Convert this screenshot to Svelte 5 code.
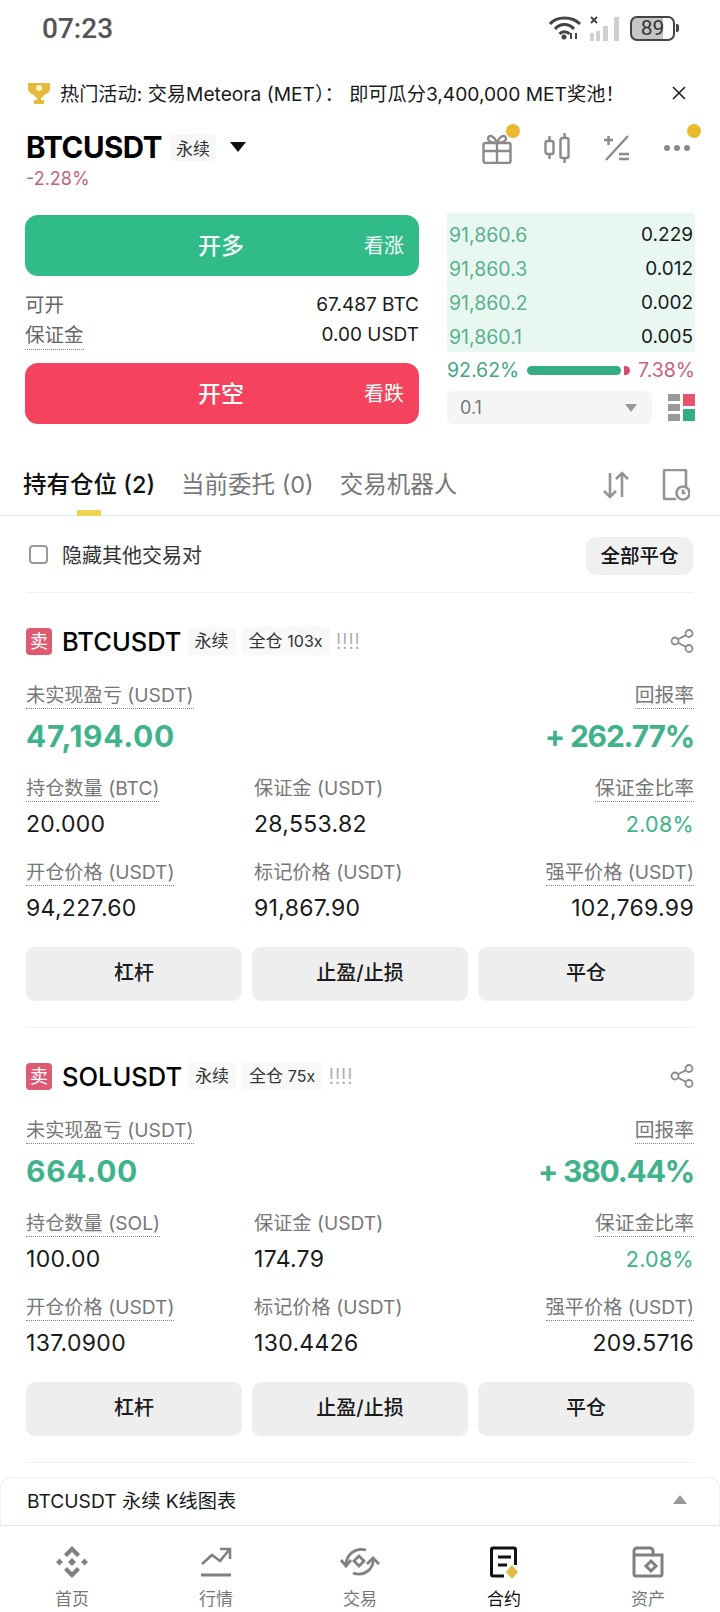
<script lang="ts">
  // Futures position screen
  const asks = [
    { price: "91,860.6", qty: "0.229" },
    { price: "91,860.3", qty: "0.012" },
    { price: "91,860.2", qty: "0.002" },
    { price: "91,860.1", qty: "0.005" },
  ];

  const positions = [
    {
      symbol: "BTCUSDT", leverage: "103x", pnl: "47,194.00", roe: "+ 262.77%",
      unit: "BTC", size: "20.000", margin: "28,553.82", ratio: "2.08%",
      entry: "94,227.60", mark: "91,867.90", liq: "102,769.99",
    },
    {
      symbol: "SOLUSDT", leverage: "75x", pnl: "664.00", roe: "+ 380.44%",
      unit: "SOL", size: "100.00", margin: "174.79", ratio: "2.08%",
      entry: "137.0900", mark: "130.4426", liq: "209.5716",
    },
  ];

  const nav = [
    { key: "home", label: "首页" },
    { key: "market", label: "行情" },
    { key: "trade", label: "交易" },
    { key: "futures", label: "合约" },
    { key: "assets", label: "资产" },
  ];
</script>

<div class="app">
  <div class="status">
    <span class="time">07:23</span>
    <div class="status-icons">
      <svg width="32" height="24" viewBox="0 0 32 24" fill="none" stroke="#444" stroke-width="3">
        <path d="M1 8C8 0 23 0 31 8" />
        <path d="M6 13C11 7 20 7 25 13" />
        <path d="M10.500 18C13 15 18 15 20.500 18" />
        <circle cx="15" cy="21" r="2.500" fill="#444" stroke="none" />
        <path d="M22 17v6M27 17v6" stroke-width="2" />
      </svg>
      <svg class="signal" width="29" height="25" viewBox="0 0 29 25">
        <path d="M1 1l6 6M7 1L1 7" stroke="#444" stroke-width="2" />
        <rect x="0" y="17" width="4" height="8" fill="#cfcfcf" />
        <rect x="6" y="15" width="4" height="10" fill="#cfcfcf" />
        <rect x="13" y="10" width="5" height="15" fill="#cfcfcf" />
        <rect x="24" y="1" width="5" height="24" fill="#cfcfcf" />
      </svg>
      <div class="battery"><span>89</span></div>
      <span class="battery-tip"></span>
    </div>
  </div>

  <div class="banner">
    <svg class="trophy" width="26" height="26" viewBox="0 0 26 26">
      <path d="M2 3h22v5c0 4-3 6-6 7-1 2-2 3-3 3v2h3v4H8v-4h3v-2c-1 0-2-1-3-3-3-1-6-3-6-7z" fill="#e6bb3c" />
      <circle cx="13" cy="8" r="3" fill="#fff3c8" />
    </svg>
    <span class="banner-text">热门活动: 交易Meteora (MET）： 即可瓜分3,400,000 MET奖池！</span>
    <svg class="close" width="16" height="16" viewBox="0 0 16 16" fill="none" stroke="#222" stroke-width="1.600">
      <path d="M2 2l12 12M14 2L2 14" />
    </svg>
  </div>

  <div class="ticker">
    <div class="ticker-left">
      <div class="ticker-name">
        <span class="ticker-symbol">BTCUSDT</span>
        <span class="chip">永续</span>
        <span class="caret"></span>
      </div>
      <div class="ticker-change">-2.28%</div>
    </div>
    <div class="ticker-icons">
      <span class="ticker-icon">
        <svg width="30" height="31" viewBox="0 0 30 31" fill="none" stroke="#8a8a8a" stroke-width="2.400">
          <rect x="1.500" y="10" width="27" height="20" rx="2" />
          <path d="M1.500 18h27M15 10v20" />
          <path d="M15 10c-3-8-9-9-9-4 0 2 4 4 9 4zM15 10c3-8 9-9 9-4 0 2-4 4-9 4z" />
        </svg>
        <i class="dot gift-dot"></i>
      </span>
      <span class="ticker-icon">
        <svg width="26" height="30" viewBox="0 0 26 30" fill="none" stroke="#8a8a8a" stroke-width="2.400">
          <rect x="1.500" y="8" width="8" height="13" rx="2" />
          <path d="M5.500 3v5M5.500 21v5" />
          <rect x="16.500" y="5" width="8" height="20" rx="2" />
          <path d="M20.500 0v5M20.500 25v5" />
        </svg>
      </span>
      <span class="ticker-icon">
        <svg width="26" height="26" viewBox="0 0 26 26" fill="none" stroke="#8a8a8a" stroke-width="2.400">
          <path d="M24 1L2 25M0 5h9M4.500 1v9M15 19h10M15 24h10" />
        </svg>
      </span>
      <span class="ticker-icon">
        <svg width="28" height="8" viewBox="0 0 28 8" fill="#8a8a8a">
          <circle cx="4" cy="4" r="3" />
          <circle cx="14" cy="4" r="3" />
          <circle cx="24" cy="4" r="3" />
        </svg>
        <i class="dot more-dot"></i>
      </span>
    </div>
  </div>

  <div class="order">
    <div class="order-left">
      <button class="trade buy">
        <span class="trade-title">开多</span>
        <span class="trade-hint">看涨</span>
      </button>
      <div class="info">
        <div class="info-row"><span class="info-key">可开</span><span>67.487 BTC</span></div>
        <div class="info-row"><span class="info-key dotted">保证金</span><span>0.00 USDT</span></div>
      </div>
      <button class="trade sell">
        <span class="trade-title">开空</span>
        <span class="trade-hint">看跌</span>
      </button>
    </div>

    <div class="order-right">
      <div class="book">
        {#each asks as ask}
          <div class="book-row"><span class="book-price">{ask.price}</span><span class="book-qty">{ask.qty}</span></div>
        {/each}
      </div>
      <div class="ratio">
        <span class="ratio-buy">92.62%</span>
        <span class="ratio-bar"><i class="bar-buy"></i><i class="bar-sell"></i></span>
        <span class="ratio-sell">7.38%</span>
      </div>
      <div class="depth">
        <div class="select">
          <span>0.1</span>
          <i class="select-caret"></i>
        </div>
        <svg width="27" height="27" viewBox="0 0 27 27">
          <rect x="0" y="0" width="12" height="7" fill="#999" />
          <rect x="0" y="10" width="12" height="7" fill="#999" />
          <rect x="0" y="20" width="12" height="7" fill="#999" />
          <rect x="15" y="0" width="12" height="12" fill="#e5546c" />
          <rect x="15" y="15" width="12" height="12" fill="#35ad84" />
        </svg>
      </div>
    </div>
  </div>

  <div class="tabs">
    <div class="tab active">持有仓位 (2)<i class="tab-line"></i></div>
    <div class="tab">当前委托 (0)</div>
    <div class="tab">交易机器人</div>
    <div class="tab-icons">
      <svg width="26" height="28" viewBox="0 0 26 28" fill="none" stroke="#949494" stroke-width="2.600">
        <path d="M7 2v24M1 20l6 6 6-6" />
        <path d="M19 26V2M13 8l6-6 6 6" />
      </svg>
      <svg width="28" height="32" viewBox="0 0 28 32" fill="none" stroke="#949494" stroke-width="2.600">
        <path d="M14 30H3a1 1 0 0 1-1-1V2a1 1 0 0 1 1-1h20a1 1 0 0 1 1 1v16" />
        <circle cx="21" cy="24" r="6.500" />
        <path d="M21 20.500V24h2.500" />
      </svg>
    </div>
  </div>

  <div class="filter">
    <label class="hide-others">
      <i class="checkbox"></i>
      <span>隐藏其他交易对</span>
    </label>
    <button class="close-all">全部平仓</button>
  </div>

  {#each positions as p}
    <div class="position">
      <div class="pos-head">
        <span class="side">卖</span>
        <span class="pos-symbol">{p.symbol}</span>
        <span class="pos-chip">永续</span>
        <span class="pos-chip">全仓 <em>{p.leverage}</em></span>
        <span class="bangs">!!!!</span>
        <svg class="share" width="24" height="24" viewBox="0 0 24 24" fill="none" stroke="#8a8a8a" stroke-width="1.800">
          <circle cx="5" cy="12" r="3.500" />
          <circle cx="19" cy="4.500" r="3.500" />
          <circle cx="19" cy="19.500" r="3.500" />
          <path d="M8 10.300l8-4.200M8 13.700l8 4.200" />
        </svg>
      </div>

      <div class="pnl-row">
        <div>
          <div class="key"><span class="dotted">未实现盈亏 (USDT)</span></div>
          <div class="pnl">{p.pnl}</div>
        </div>
        <div class="right">
          <div class="key wide"><span class="dotted">回报率</span></div>
          <div class="pnl roe">{p.roe}</div>
        </div>
      </div>

      <div class="stats">
        <div>
          <div class="key"><span class="dotted">持仓数量 ({p.unit})</span></div>
          <div class="val">{p.size}</div>
        </div>
        <div>
          <div class="key">保证金 (USDT)</div>
          <div class="val">{p.margin}</div>
        </div>
        <div class="right">
          <div class="key wide"><span class="dotted">保证金比率</span></div>
          <div class="val green">{p.ratio}</div>
        </div>
        <div>
          <div class="key"><span class="dotted">开仓价格 (USDT)</span></div>
          <div class="val">{p.entry}</div>
        </div>
        <div>
          <div class="key">标记价格 (USDT)</div>
          <div class="val">{p.mark}</div>
        </div>
        <div class="right">
          <div class="key"><span class="dotted">强平价格 (USDT)</span></div>
          <div class="val">{p.liq}</div>
        </div>
      </div>

      <div class="actions">
        <button>杠杆</button>
        <button>止盈/止损</button>
        <button>平仓</button>
      </div>
    </div>
  {/each}

  <div class="chart-bar">
    <span>BTCUSDT 永续 K线图表</span>
    <i class="chart-caret"></i>
  </div>

  <nav class="nav">
    {#each nav as item}
      <div class="nav-item" class:current={item.key === "futures"}>
        {#if item.key === "home"}
          <svg width="32" height="32" viewBox="0 0 32 32" fill="#808080">
            <path d="M16 0l8 8-3 3-5-5-5 5-3-3z" />
            <path d="M16 32l8-8-3-3-5 5-5-5-3 3z" />
            <path d="M16 12l4 4-4 4-4-4z" />
            <path d="M3.500 12.500l3.500 3.500-3.500 3.500L0 16z" />
            <path d="M28.500 12.500L32 16l-3.500 3.500L25 16z" />
          </svg>
        {:else if item.key === "market"}
          <svg width="30" height="32" viewBox="0 0 30 32" fill="none" stroke="#808080" stroke-width="2.600">
            <path d="M1 18l10-9 8 6L28 4M19 3h10v10" />
            <path d="M0 29h30" stroke-width="3" />
          </svg>
        {:else if item.key === "trade"}
          <svg width="38" height="32" viewBox="0 0 38 32" fill="none" stroke="#808080" stroke-width="2.800">
            <path d="M5 19C5 9 14 1 25 4" />
            <path d="M0 14l5 6 5-6" />
            <path d="M32 13C33 23 23 31 12 27" />
            <path d="M26 18l6-6 6 6" />
            <path d="M18 10l5 5-5 5-5-5z" />
          </svg>
        {:else if item.key === "futures"}
          <svg width="32" height="32" viewBox="0 0 32 32" fill="none" stroke="#111" stroke-width="3">
            <path d="M16 30H5a1.500 1.500 0 0 1-1.500-1.500v-25A1.500 1.500 0 0 1 5 2h21a1.500 1.500 0 0 1 1.500 1.500V19" />
            <path d="M10 11h13M10 19h9" />
            <path d="M24 19l6 7-6 7-6-7z" fill="#e5b945" stroke="none" />
          </svg>
        {:else}
          <svg width="32" height="32" viewBox="0 0 32 32" fill="none" stroke="#808080" stroke-width="3">
            <path d="M4 30a2 2 0 0 1-2-2V5a3 3 0 0 1 3-3h13a3 3 0 0 1 3 3v4h9v19a2 2 0 0 1-2 2z" />
            <path d="M2 9h19" />
            <path d="M19 15l5 5-5 5-5-5z" />
          </svg>
        {/if}
        <span>{item.label}</span>
      </div>
    {/each}
  </nav>
</div>

<style>
  :global(body) {
    background: #fff;
  }

  .app {
    width: 720px;
    height: 1612px;
    overflow: hidden;
    display: flex;
    flex-direction: column;
    background: #fff;
    color: #1a1a1a;
    font-family: Inter, "Noto Sans CJK SC", sans-serif;
  }

  i {
    display: block;
    font-style: normal;
  }

  button {
    border: none;
    font-family: inherit;
    padding: 0;
  }

  /* status bar */
  .status {
    height: 56px;
    flex-shrink: 0;
    display: flex;
    align-items: center;
    justify-content: space-between;
    padding: 0 41px 0 42px;
  }

  .time {
    font-family: Roboto, sans-serif;
    font-size: 28px;
    font-weight: 500;
    color: #555;
  }

  .status-icons {
    display: flex;
    align-items: center;
  }

  .signal {
    margin-left: 9px;
  }

  .battery {
    width: 45px;
    height: 25px;
    margin-left: 11px;
    box-sizing: border-box;
    border: 2px solid #444;
    border-radius: 7px;
    background: linear-gradient(90deg, #c6c6c6 76%, #fff 76%);
    display: flex;
    align-items: center;
    justify-content: center;
    font-family: Roboto, sans-serif;
    font-size: 21px;
    color: #333;
  }

  .battery-tip {
    width: 3px;
    height: 8px;
    margin-left: 1px;
    background: #444;
    border-radius: 0 2px 2px 0;
  }

  /* campaign banner */
  .banner {
    height: 50px;
    margin-top: 12px;
    flex-shrink: 0;
    display: flex;
    align-items: center;
    padding: 0 33px 0 26px;
  }

  .trophy {
    flex-shrink: 0;
  }

  .banner-text {
    margin-left: 8px;
    font-size: 19.200px;
    white-space: nowrap;
    flex: 1;
  }

  /* ticker */
  .ticker {
    height: 82px;
    flex-shrink: 0;
    display: flex;
    justify-content: space-between;
    padding: 0 26px;
  }

  .ticker-name {
    display: flex;
    align-items: center;
    height: 40px;
    margin-top: 9px;
  }

  .ticker-symbol {
    font-size: 29.500px;
    font-weight: 700;
    color: #000;
    letter-spacing: -0.5px;
  }

  .chip {
    margin-left: 8px;
    padding: 1px 6px;
    font-size: 17px;
    background: #f7f7f7;
    border-radius: 4px;
    color: #333;
  }

  .caret {
    margin-left: 14px;
    width: 0;
    height: 0;
    border-left: 8px solid transparent;
    border-right: 8px solid transparent;
    border-top: 10px solid #111;
  }

  .ticker-change {
    font-size: 18px;
    color: #c4647e;
    line-height: 24px;
  }

  .ticker-icons {
    display: flex;
    align-items: center;
    height: 50px;
    margin-top: 5px;
    margin-right: -13px;
  }

  .ticker-icon {
    position: relative;
    display: flex;
    align-items: center;
    justify-content: center;
    width: 60px;
    height: 32px;
  }

  .dot {
    position: absolute;
    width: 14px;
    height: 14px;
    border-radius: 50%;
    background: #ecb82c;
  }

  .gift-dot {
    top: -8px;
    right: 7px;
  }

  .more-dot {
    top: -8px;
    right: 6px;
  }

  /* order panel */
  .order {
    flex-shrink: 0;
    display: flex;
    justify-content: space-between;
    padding: 0 25px;
    margin-top: 15px;
  }

  .order-left {
    width: 394px;
  }

  .trade {
    position: relative;
    display: block;
    width: 100%;
    height: 61px;
    padding-bottom: 4px;
    border-radius: 13px;
    color: #f4fff8;
    text-align: center;
  }

  .buy {
    background: #31bb88;
  }

  .sell {
    background: #f5425f;
  }

  .trade-title {
    font-size: 23px;
    font-weight: 500;
    margin-left: -2px;
  }

  .trade-hint {
    position: absolute;
    right: 15px;
    top: 48%;
    transform: translateY(-50%);
    font-size: 20px;
  }

  .info {
    height: 87px;
    padding-top: 14px;
    box-sizing: border-box;
    font-size: 19px;
  }

  .info-row {
    display: flex;
    justify-content: space-between;
    height: 30px;
    line-height: 30px;
  }

  .info-key {
    color: #666;
    font-size: 19.500px;
  }

  .dotted {
    border-bottom: 1px dotted #888;
  }

  .order-right {
    width: 248px;
    margin-top: -2px;
  }

  .book {
    background: #e8f8f1;
    height: 139px;
    padding: 5px 2px 0 2px;
    box-sizing: border-box;
    font-size: 19.500px;
  }

  .book-row {
    display: flex;
    justify-content: space-between;
    height: 34px;
    line-height: 34px;
  }

  .book-price {
    color: #5bb08f;
  }

  .book-qty {
    font-size: 19px;
  }

  .ratio {
    display: flex;
    align-items: center;
    height: 36px;
    font-size: 19.500px;
    justify-content: space-between;
  }

  .ratio-buy {
    color: #45a585;
  }

  .ratio-sell {
    color: #c4647e;
  }

  .ratio-bar {
    display: flex;
    align-items: center;
    gap: 3px;
    width: 103px;
  }

  .bar-buy {
    flex: 1;
    height: 9px;
    background: #35ad84;
    border-radius: 5px;
  }

  .bar-sell {
    width: 6px;
    height: 9px;
    background: #d64d6d;
    border-radius: 0 5px 5px 0;
  }

  .depth {
    display: flex;
    align-items: center;
    justify-content: space-between;
    margin-top: 3px;
  }

  .select {
    width: 205px;
    height: 33px;
    box-sizing: border-box;
    padding: 0 15px 0 13px;
    background: #f5f5f5;
    border-radius: 6px;
    display: flex;
    align-items: center;
    justify-content: space-between;
    color: #777;
    font-size: 18px;
  }

  .select-caret {
    border-left: 6px solid transparent;
    border-right: 6px solid transparent;
    border-top: 8px solid #999;
  }

  /* tabs */
  .tabs {
    flex-shrink: 0;
    display: flex;
    align-items: center;
    height: 92px;
    padding: 0 30px 0 23px;
    box-sizing: border-box;
    border-bottom: 1px solid #e6e6e6;
    font-size: 23.500px;
    color: #777;
    gap: 26px;
  }

  .tab {
    position: relative;
    white-space: nowrap;
    margin-top: 27px;
  }

  .tab.active {
    color: #111;
    font-weight: 500;
  }

  .tab-line {
    position: absolute;
    left: 54px;
    bottom: -16px;
    width: 24px;
    height: 6px;
    background: #efd454;
  }

  .tab-icons {
    margin-left: auto;
    margin-top: 30px;
    display: flex;
    align-items: center;
    gap: 33px;
  }

  /* filter row */
  .filter {
    flex-shrink: 0;
    height: 76px;
    margin: 0 26px;
    display: flex;
    align-items: center;
    justify-content: space-between;
    border-bottom: 1px solid #eee;
  }

  .hide-others {
    display: flex;
    align-items: center;
    gap: 14px;
    font-size: 20px;
    color: #333;
    margin-left: 3px;
  }

  .checkbox {
    width: 15px;
    height: 15px;
    border: 2px solid #999;
    border-radius: 4px;
  }

  .close-all {
    width: 107px;
    height: 38px;
    padding-bottom: 2px;
    border-radius: 10px;
    background: #f0f0f0;
    font-size: 19.500px;
    font-weight: 500;
    color: #111;
    margin-top: 3px;
    margin-right: 1px;
  }

  /* position card */
  .position {
    flex-shrink: 0;
    height: 435px;
    margin: 0 26px;
    box-sizing: border-box;
    border-bottom: 1px solid #eee;
    display: flex;
    flex-direction: column;
  }

  .pos-head {
    display: flex;
    align-items: center;
    height: 40px;
    margin-top: 28px;
  }

  .side {
    width: 26px;
    height: 27px;
    border-radius: 4px;
    background: #de5a73;
    color: #fff;
    font-size: 18px;
    text-align: center;
    line-height: 27px;
  }

  .pos-symbol {
    margin-left: 10px;
    font-size: 25.500px;
    font-weight: 500;
    color: #000;
  }

  .pos-chip {
    margin-left: 6px;
    padding: 0 7px 3px;
    font-size: 17px;
    background: #f8f8f8;
    border-radius: 4px;
    color: #333;
  }

  .pos-chip em {
    font-style: normal;
    font-size: 16px;
  }

  .bangs {
    margin-left: 6px;
    font-size: 22px;
    font-weight: 300;
    color: #aaa;
  }

  .share {
    margin-left: auto;
  }

  .pnl-row {
    display: flex;
    justify-content: space-between;
    margin-top: 21px;
  }

  .key {
    font-size: 19.200px;
    line-height: 26px;
    height: 27px;
    color: #777;
    white-space: nowrap;
  }

  .key.wide {
    font-size: 19.800px;
  }

  .key .dotted {
    display: inline-block;
  }

  .pnl {
    font-size: 30px;
    font-weight: 700;
    color: #40b38c;
    line-height: 40px;
    margin-top: 7px;
    letter-spacing: 0.7px;
  }

  .roe {
    letter-spacing: -1.200px;
  }

  .right {
    text-align: right;
  }

  .stats {
    display: grid;
    grid-template-columns: 228px 1fr auto;
    row-gap: 21px;
    margin-top: 19px;
  }

  .val {
    font-size: 23px;
    letter-spacing: 0.3px;
    line-height: 28px;
    margin-top: 8px;
  }

  .green {
    color: #40b38c;
    font-size: 21.500px;
  }

  .actions {
    display: grid;
    grid-template-columns: repeat(3, 1fr);
    gap: 10px;
    margin-top: 25px;
  }

  .actions button {
    height: 54px;
    padding-bottom: 5px;
    border-radius: 9px;
    background: #eeeeee;
    font-size: 20px;
    font-weight: 500;
    color: #1a1a1a;
  }

  /* chart bar */
  .chart-bar {
    flex-shrink: 0;
    height: 49px;
    margin-top: 14px;
    box-sizing: border-box;
    padding: 0 32px 4px 26px;
    display: flex;
    align-items: center;
    justify-content: space-between;
    border: 1px solid #f0f0f0;
    border-bottom-color: #e6e6e6;
    border-radius: 10px 10px 0 0;
    font-size: 19.200px;
  }

  .chart-caret {
    border-left: 7px solid transparent;
    border-right: 7px solid transparent;
    border-bottom: 9px solid #999;
  }

  /* bottom nav */
  .nav {
    flex: 1;
    display: grid;
    grid-template-columns: repeat(5, 1fr);
  }

  .nav-item {
    display: flex;
    flex-direction: column;
    align-items: center;
    padding-top: 20px;
    gap: 9px;
    font-size: 17px;
    line-height: 24px;
    color: #777;
  }

  .nav-item svg {
    overflow: visible;
  }

  .nav-item.current {
    color: #111;
  }
</style>
